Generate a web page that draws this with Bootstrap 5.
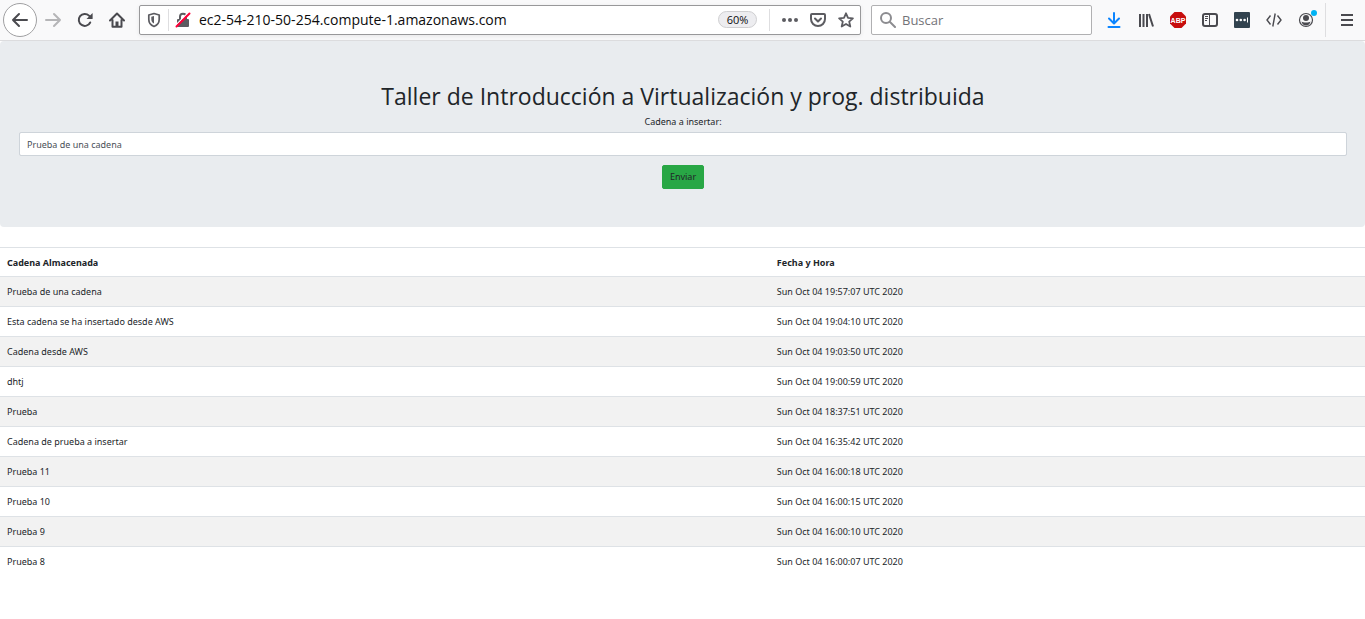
<!DOCTYPE html>
<html lang="es">
<head>
<meta charset="utf-8">
<meta name="viewport" content="width=device-width, initial-scale=1">
<title>Taller de Introducción a Virtualización</title>
<link href="https://cdn.jsdelivr.net/npm/bootstrap@5.3.0/dist/css/bootstrap.min.css" rel="stylesheet">
<style>
body { font-family: "Open Sans", "Noto Sans", sans-serif; font-size: 9px; line-height: 14px; color: #212529; background: #fff; }
svg { display: block; flex: none; }
.toolbar { height: 41px; background: #f9f9fa; border-bottom: 1px solid #dcdcde; padding: 0 2px 1px 3px; color: #4a4a4f; }
.tool { width: 32px; height: 32px; padding: 0; border: 0; background: none; color: inherit; display: flex; align-items: center; justify-content: center; flex: none; }
.tool:disabled { color: #b5b5b7; }
.tool-back { width: 34px; height: 34px; border: 1px solid #a0a0a2; border-radius: 50%; background: #fff; }
.field { height: 30px; background: #fff; border: 1px solid #b0b0b2; border-radius: 2px; color: #5c5c61; }
.field-url { margin: 0 10px 0 6px; border-color: #98989a; box-shadow: 0 1px 4px rgba(0,0,0,.08); }
.field-search { width: 221px; margin-right: 6px; }
.field input { border: 0; outline: 0; background: none; padding: 0; margin-left: 2px; min-width: 0; font-size: 13px; color: #0c0c0d; }
.field-url input { font-size: 14px; }
.field-search input::placeholder { color: #737377; opacity: 1; }
.field .tool { width: 28px; height: 28px; }
.rule-v { width: 1px; height: 22px; background: #dedee0; flex: none; }
.rule-url { margin: 0 6px 0 12px; }
.rule-tall { height: 34px; margin: 0 5px 0 3px; }
.zoom-level { width: 39px; height: 17px; border: 1px solid #cfcfd1; border-radius: 9px; background: #ededf0; color: #0c0c0d; font-size: 11px; line-height: 15px; padding: 0; }
.hero { background: #e9ecef; border-radius: 4px; padding: 40px 18px 38px 19px; margin-bottom: 20px; }
.hero h1 { font-size: 23px; line-height: 30px; font-weight: 400; margin-bottom: 4px; }
.hero label, .hero .form-control, .btn-send, .records { font-family: "Noto Sans", "Open Sans", sans-serif; }
.hero label { margin-bottom: 3px; display: block; }
.hero .form-control { height: 24px; font-size: 9px; line-height: 14px; padding: 4px 7px; border-color: #ced4da; border-radius: 2px; color: #495057; margin-bottom: 9px; }
.btn-send { background: #28a745; border-color: #28a745; color: #212529; font-size: 9px; line-height: 14px; padding: 4px 7px; border-radius: 2px; }
.btn-send:hover { background: #218838; }
.records > :not(caption) > * > * { padding: 8px 7px 7px; border-top: 1px solid #dee2e6; border-bottom: 0; color: #212529; }
.records thead th { padding-bottom: 6px; }
.records tbody tr:nth-child(odd) > * { background: #f2f2f2; box-shadow: none; }
.col-text { width: 56.4%; }
</style>
</head>
<body>
<nav class="toolbar d-flex align-items-center" aria-label="Navegador">
  <button class="tool tool-back" aria-label="Atrás"><svg width="18" height="18" viewBox="0 0 18 18" fill="none" stroke="currentColor" stroke-width="2" stroke-linecap="round" stroke-linejoin="round"><path d="M16 9H2M8 3 2 9l6 6"/></svg></button>
  <button class="tool" disabled aria-label="Adelante"><svg width="18" height="18" viewBox="0 0 18 18" fill="none" stroke="currentColor" stroke-width="2" stroke-linecap="round" stroke-linejoin="round"><path d="M2 9h14M10 3l6 6-6 6"/></svg></button>
  <button class="tool" aria-label="Recargar"><svg width="16" height="16" viewBox="0 0 16 16"><path d="M13.2 10.5A6 6 0 1 1 12 3.6l1 1" fill="none" stroke="currentColor" stroke-width="2" stroke-linecap="round"/><path d="M15.6 1v5.6a.5.5 0 0 1-.5.5H9.500z" fill="currentColor"/></svg></button>
  <button class="tool" aria-label="Inicio"><svg width="16" height="16" viewBox="0 0 16 16" fill="none" stroke="currentColor" stroke-width="2" stroke-linecap="round" stroke-linejoin="round"><path d="M1 8.500 8 1.500l7 7M3.500 8v6.800h9V8"/><path d="M7.500 14V10.500h1V14" stroke-linecap="butt" stroke-linejoin="miter"/></svg></button>

  <div class="field field-url d-flex align-items-center flex-grow-1">
    <button class="tool" aria-label="Protección"><svg width="14" height="16" viewBox="0 0 14 16"><path d="M7 1.500 12.200 3v4.500c0 3.500-2 5.700-5.200 7-3.200-1.300-5.200-3.500-5.200-7V3z" fill="none" stroke="currentColor" stroke-width="1.700" stroke-linejoin="round"/><path d="M7 4v7.500C5 10.500 4.300 9 4.300 7V4.700z" fill="currentColor"/></svg></button>
    <span class="rule-v"></span>
    <button class="tool" aria-label="Conexión no segura"><svg width="16" height="16" viewBox="0 0 16 16"><path d="M5 7V4.800a3 3 0 0 1 6 0V7" fill="none" stroke="currentColor" stroke-width="2"/><rect x="2" y="7" width="12" height="8" rx="1" fill="currentColor"/><path d="M.5 13.500 13 1" stroke="#fff" stroke-width="1.500"/><path d="M1.500 14.500 14.500 1.500" stroke="#ff0039" stroke-width="2" stroke-linecap="round"/></svg></button>
    <input class="flex-grow-1" type="text" aria-label="Dirección" value="ec2-54-210-50-254.compute-1.amazonaws.com">
    <button class="zoom-level">60%</button>
    <span class="rule-v rule-url"></span>
    <button class="tool" aria-label="Más acciones"><svg width="18" height="16" viewBox="0 0 18 16" fill="currentColor"><circle cx="3" cy="8" r="2"/><circle cx="9" cy="8" r="2"/><circle cx="15" cy="8" r="2"/></svg></button>
    <button class="tool" aria-label="Pocket"><svg width="16" height="16" viewBox="0 0 16 16" fill="none" stroke="currentColor" stroke-width="2" stroke-linecap="round" stroke-linejoin="round"><path d="M2 2h12a1 1 0 0 1 1 1v4a7 7 0 0 1-14 0V3a1 1 0 0 1 1-1z"/><path d="m5 6.500 3 3 3-3"/></svg></button>
    <button class="tool" aria-label="Marcador"><svg width="16" height="16" viewBox="0 0 16 16" fill="none" stroke="currentColor" stroke-width="1.800" stroke-linejoin="round"><path d="m8 1.300 2 4.500 4.900.5-3.700 3.300 1.100 4.900L8 12l-4.300 2.500 1.100-4.900L1.100 6.300 6 5.800z"/></svg></button>
  </div>

  <div class="field field-search d-flex align-items-center">
    <svg class="ms-2 me-1" width="16" height="16" viewBox="0 0 16 16" fill="none" stroke="#8c8c90" stroke-width="2" stroke-linecap="round"><circle cx="6" cy="6" r="5"/><path d="m10 10 5 5"/></svg>
    <input class="flex-grow-1" type="text" aria-label="Buscar" placeholder="Buscar">
  </div>

  <button class="tool" aria-label="Descargas"><svg width="16" height="16" viewBox="0 0 16 16" fill="none" stroke="#0a84ff" stroke-width="2" stroke-linecap="round" stroke-linejoin="round"><path d="M8 1v10M3 6.500 8 11.500l5-5M2.500 15h11"/></svg></button>
  <button class="tool" aria-label="Biblioteca"><svg width="16" height="16" viewBox="0 0 16 16" fill="none" stroke="currentColor" stroke-width="2"><path d="M2 2v13M5.500 2v13M9 2v13M11 2l4 12.500"/></svg></button>
  <button class="tool" aria-label="Adblock Plus"><svg width="18" height="18" viewBox="0 0 18 18"><path d="M5.500 1h7L17 5.500v7L12.500 17h-7L1 12.500v-7z" fill="#c70d0d"/><text x="9" y="11.500" text-anchor="middle" font-family="Liberation Sans, sans-serif" font-size="7" font-weight="700" fill="#fff">ABP</text></svg></button>
  <button class="tool" aria-label="Barra lateral"><svg width="16" height="16" viewBox="0 0 16 16" fill="none" stroke="currentColor"><rect x="1" y="2" width="14" height="12" rx="2" stroke-width="2"/><path d="M7.500 2v12"/><path d="M3 4.500h3M3 6.500h3M3 8.500h2"/></svg></button>
  <button class="tool" aria-label="Contraseñas"><svg width="16" height="16" viewBox="0 0 16 16"><rect width="16" height="16" rx="1" fill="#32434f"/><g fill="#fff"><circle cx="3" cy="8" r="1.300"/><circle cx="6.800" cy="8" r="1.300"/><circle cx="10.600" cy="8" r="1.300"/><path d="M13 5.500h1v5h-1z"/></g></svg></button>
  <button class="tool" aria-label="Código"><svg width="16" height="16" viewBox="0 0 16 16" fill="none" stroke="currentColor" stroke-width="1.400"><path d="M4.500 3.500 1 8l3.500 4.500M11.500 3.500 15 8l-3.500 4.500M9.200 1.500 6.800 14.500"/></svg></button>
  <button class="tool" aria-label="Cuenta"><svg width="24" height="24" viewBox="0 0 24 24"><circle cx="12" cy="12" r="6.500" fill="none" stroke="currentColor" stroke-width="1.200"/><circle cx="12" cy="10" r="3" fill="currentColor"/><path d="M7.500 13.500c1 .8 2.500 1 4.500 1s3.500-.2 4.500-1c-.5 2.500-2.300 4-4.500 4s-4-1.500-4.500-4z" fill="currentColor"/><circle cx="20" cy="5" r="3" fill="#00b3f4"/></svg></button>
  <span class="rule-v rule-tall"></span>
  <button class="tool" aria-label="Menú"><svg width="14" height="14" viewBox="0 0 14 14" fill="currentColor"><path d="M1 1h12v2H1zM1 6h12v2H1zM1 11h12v2H1z"/></svg></button>
</nav>

<main>
  <form class="hero text-center" onsubmit="return false">
    <h1>Taller de Introducción a Virtualización y prog. distribuida</h1>
    <label for="cadena">Cadena a insertar:</label>
    <input id="cadena" class="form-control" type="text" value="Prueba de una cadena">
    <button class="btn btn-send" type="submit">Enviar</button>
  </form>

  <table class="table records mb-0">
    <thead>
      <tr><th class="col-text" scope="col">Cadena Almacenada</th><th scope="col">Fecha y Hora</th></tr>
    </thead>
    <tbody>
      <tr><td>Prueba de una cadena</td><td>Sun Oct 04 19:57:07 UTC 2020</td></tr>
      <tr><td>Esta cadena se ha insertado desde AWS</td><td>Sun Oct 04 19:04:10 UTC 2020</td></tr>
      <tr><td>Cadena desde AWS</td><td>Sun Oct 04 19:03:50 UTC 2020</td></tr>
      <tr><td>dhtj</td><td>Sun Oct 04 19:00:59 UTC 2020</td></tr>
      <tr><td>Prueba</td><td>Sun Oct 04 18:37:51 UTC 2020</td></tr>
      <tr><td>Cadena de prueba a insertar</td><td>Sun Oct 04 16:35:42 UTC 2020</td></tr>
      <tr><td>Prueba 11</td><td>Sun Oct 04 16:00:18 UTC 2020</td></tr>
      <tr><td>Prueba 10</td><td>Sun Oct 04 16:00:15 UTC 2020</td></tr>
      <tr><td>Prueba 9</td><td>Sun Oct 04 16:00:10 UTC 2020</td></tr>
      <tr><td>Prueba 8</td><td>Sun Oct 04 16:00:07 UTC 2020</td></tr>
    </tbody>
  </table>
</main>
<script src="https://cdn.jsdelivr.net/npm/bootstrap@5.3.0/dist/js/bootstrap.bundle.min.js"></script>
</body>
</html>
